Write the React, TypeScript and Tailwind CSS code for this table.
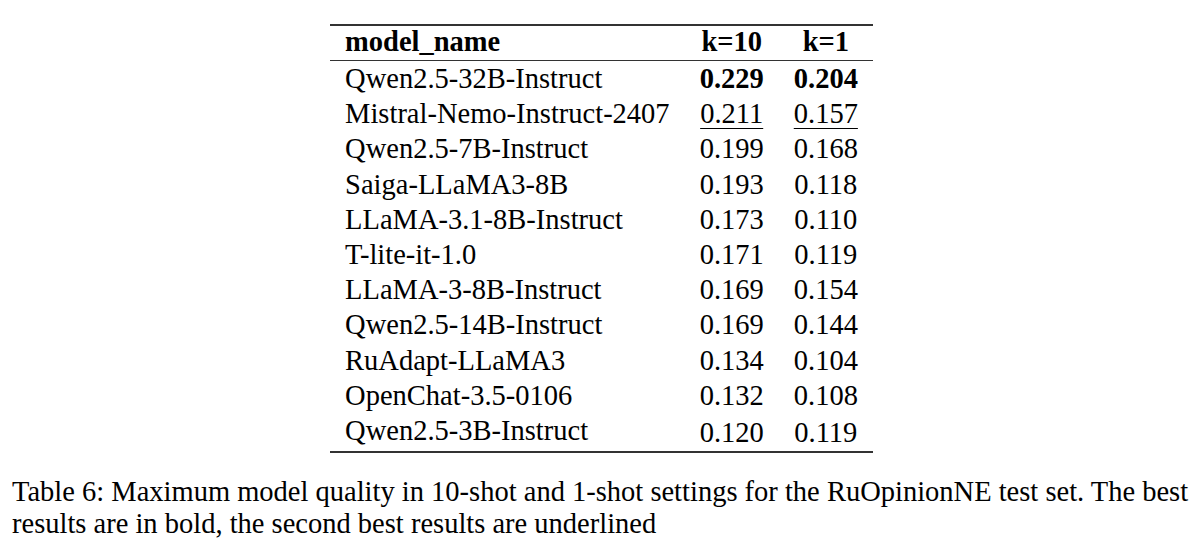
const ROWS: { name: string; k10: string; k1: string; style?: 'bold' | 'under' }[] = [
  { name: 'Qwen2.5-32B-Instruct', k10: '0.229', k1: '0.204', style: 'bold' },
  { name: 'Mistral-Nemo-Instruct-2407', k10: '0.211', k1: '0.157', style: 'under' },
  { name: 'Qwen2.5-7B-Instruct', k10: '0.199', k1: '0.168' },
  { name: 'Saiga-LLaMA3-8B', k10: '0.193', k1: '0.118' },
  { name: 'LLaMA-3.1-8B-Instruct', k10: '0.173', k1: '0.110' },
  { name: 'T-lite-it-1.0', k10: '0.171', k1: '0.119' },
  { name: 'LLaMA-3-8B-Instruct', k10: '0.169', k1: '0.154' },
  { name: 'Qwen2.5-14B-Instruct', k10: '0.169', k1: '0.144' },
  { name: 'RuAdapt-LLaMA3', k10: '0.134', k1: '0.104' },
  { name: 'OpenChat-3.5-0106', k10: '0.132', k1: '0.108' },
  { name: 'Qwen2.5-3B-Instruct', k10: '0.120', k1: '0.119' },
];

function Score({ value, style }: { value: string; style?: 'bold' | 'under' }) {
  if (style === 'bold') return <span className="font-bold">{value}</span>;
  if (style === 'under')
    return <span className="underline decoration-1 underline-offset-[5px]">{value}</span>;
  return <span>{value}</span>;
}

export default function App() {
  return (
    <div className="w-[1200px] h-[549px] bg-white text-black font-['Liberation_Serif','Times_New_Roman',serif] overflow-hidden">
      <div className="flex justify-center pt-6 pl-[3px]">
        <table className="border-collapse text-[28.5px] leading-[35.2px]">
          <thead>
            <tr className="border-t-2 border-b border-[#333] leading-[32px]">
              <th className="text-left font-bold px-[15px] pb-[2px]">model_name</th>
              <th className="text-center font-bold px-[15px] pb-[2px]">k=10</th>
              <th className="text-center font-bold px-[15px] pb-[2px]">k=1</th>
            </tr>
          </thead>
          <tbody className="border-b-2 border-[#333]">
            {ROWS.map((r, i) => (
              <tr key={r.name}>
                <td className={`px-[15px] whitespace-nowrap ${i === ROWS.length - 1 ? 'pb-[3px]' : ''}`}>
                  {r.name}
                </td>
                <td className="px-[15px] text-center">
                  <Score value={r.k10} style={r.style} />
                </td>
                <td className="px-[15px] text-center">
                  <Score value={r.k1} style={r.style} />
                </td>
              </tr>
            ))}
          </tbody>
        </table>
      </div>

      {/* Caption */}
      <div className="mt-[23px] pl-3 text-[28.5px] leading-[32px]">
        <div className="whitespace-nowrap">
          Table 6: Maximum model quality in 10-shot and 1-shot settings for the RuOpinionNE test set. The best
        </div>
        <div className="whitespace-nowrap">results are in bold, the second best results are underlined</div>
      </div>
    </div>
  );
}
